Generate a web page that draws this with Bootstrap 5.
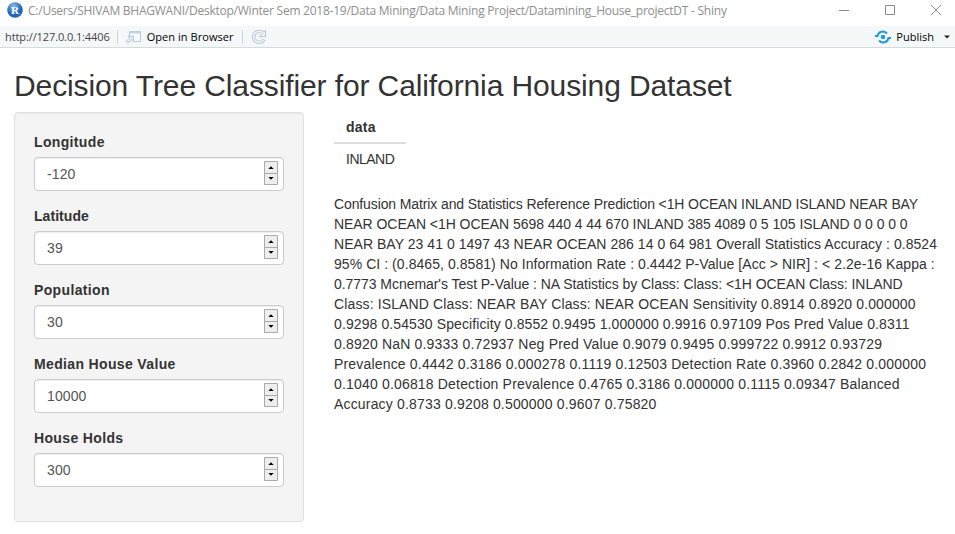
<!DOCTYPE html>
<html lang="en">
<head>
<meta charset="utf-8">
<meta name="viewport" content="width=device-width, initial-scale=1">
<title>Datamining_House_projectDT - Shiny</title>
<link href="https://cdn.jsdelivr.net/npm/bootstrap@5.3.0/dist/css/bootstrap.min.css" rel="stylesheet">
<style>
body{font:14px/20px "Liberation Sans",Arial,sans-serif;color:#333;background:#fff;height:534px;overflow:hidden}
.titlebar{height:26px;padding-left:7px;font:12px/20px "Open Sans","Noto Sans",sans-serif;color:#8e8e8e}
.title-text{margin-left:5px;padding-top:1px;white-space:nowrap;letter-spacing:-.245px}
.win-icons{margin-right:13px;gap:34px;height:20px}
.toolbar{height:22px;background:#f4f8f9;border-bottom:1px solid #d5dadc;font:11px/20px "Open Sans","Noto Sans",sans-serif;color:#444;padding:0 5px}
.tool-sep{width:1px;height:14px;background:#ccd3d6}
.tool-label{color:#000;font-weight:500}
#url{letter-spacing:-.1px}
.page{padding:20px 14px 0}
.page h2{font-size:30px;line-height:33px;margin:0 0 11px;font-weight:400;letter-spacing:-.11px;padding-top:1px;height:33px}
.well{width:290px;height:410px;padding:19px;background:#f4f4f4;border:1px solid #e0e0e0;border-radius:4px;box-shadow:inset 0 1px 1px rgba(0,0,0,.05)}
.well label{font-weight:700;margin-bottom:5px;display:block;letter-spacing:.35px}
.well label[for=lat]{letter-spacing:.05px}
.field{margin-bottom:15px}
.field .form-control{height:34px;padding:6px 12px;font-size:14px;line-height:20px;color:#555;border:1px solid #ccc;border-radius:4px;box-shadow:inset 0 1px 1px rgba(0,0,0,.075);letter-spacing:.12px}
.spin{right:6px;top:4px;width:14px;height:24px}
.results{margin-left:30px;width:607px}
.data-grid{width:72px;margin-bottom:20px}
.data-grid th,.data-grid td{padding:5px 12px;line-height:20px}
.data-grid th{border-bottom:2px solid #ddd;letter-spacing:.25px}
.data-grid td{padding-right:0;letter-spacing:-.5px}
.report span{display:block;white-space:nowrap}
.report span:nth-child(1){letter-spacing:-.115px}
.report span:nth-child(2){letter-spacing:-.055px}
.report span:nth-child(3){letter-spacing:.04px}
.report span:nth-child(4){letter-spacing:.06px}
.report span:nth-child(5){letter-spacing:-.05px}
.report span:nth-child(6){letter-spacing:.125px}
.report span:nth-child(7){letter-spacing:.1px}
.report span:nth-child(n+8){letter-spacing:.175px}
</style>
<script src="https://cdn.jsdelivr.net/npm/bootstrap@5.3.0/dist/js/bootstrap.bundle.min.js"></script>
</head>
<body>
<svg class="d-none">
  <symbol id="spinner" viewBox="0 0 14 24">
    <path d="M.5.5h13v23H.5z" fill="#eee" stroke="#a9a9a9"/><path d="M1 12.500h12" stroke="#a9a9a9"/>
    <path d="M4.300 8h5.400L7 5.200zM4.300 16h5.400L7 18.800z" fill="#000"/>
  </symbol>
</svg>
<header>
  <div class="titlebar d-flex">
    <svg width="16" height="20" viewBox="0 0 16 20"><defs><radialGradient id="ball" cx=".4" cy=".25"><stop stop-color="#8ab8e8"/><stop offset="1" stop-color="#2466b8"/></radialGradient></defs><circle cx="8" cy="10" r="7.800" fill="url(#ball)"/><text x="8" y="13.800" text-anchor="middle" font-family="Liberation Serif,serif" font-weight="700" font-size="11" fill="#fff">R</text></svg>
    <div class="title-text">C:/Users/SHIVAM BHAGWANI/Desktop/Winter Sem 2018-19/Data Mining/Data Mining Project/Datamining_House_projectDT - Shiny</div>
    <div class="win-icons d-flex align-items-center ms-auto">
      <svg width="12" height="12" fill="none" stroke="#888"><path d="M1 6.500h10"/></svg>
      <svg width="12" height="12" fill="none" stroke="#888"><path d="M1.500 1.500h9v9h-9z"/></svg>
      <svg width="12" height="12" fill="none" stroke="#888"><path d="M1 1l10 10M11 1L1 11"/></svg>
    </div>
  </div>
  <div class="toolbar d-flex align-items-center">
    <span id="url">http://127.0.0.1:4406</span>
    <span class="tool-sep" style="margin-left:7px"></span>
    <svg style="margin-left:7px" width="16" height="14" viewBox="0 0 16 14"><path d="M4.500 6V1.500h11v10H9" fill="#f7fbfd" stroke="#b9c8d3"/><path d="M4.500 2.500h11" stroke="#c3d2dc" stroke-width="2"/><path d="M1 11.500l4-4-2-1.500h5.500v5.500L7 9.500l-4 3.500z" fill="#e2edf6" stroke="#a9bdd0" stroke-width=".8"/></svg>
    <span class="tool-label" id="open" style="margin-left:6px;letter-spacing:.06px">Open in Browser</span>
    <span class="tool-sep ms-2"></span>
    <svg class="ms-2" width="16" height="16" viewBox="0 0 16 16" fill="none"><path d="M12.300 4.200A5.500 5.500 0 1 0 13 10.500" stroke="#b4bfcc" stroke-width="3.400"/><path d="M14.500 1.500v6.200H8.300z" fill="#edf2f6" stroke="#b4bfcc" stroke-width=".9"/><path d="M12.300 4.200A5.500 5.500 0 1 0 12.600 11" stroke="#edf2f6" stroke-width="1.800"/></svg>
    <div class="d-flex align-items-center ms-auto">
      <svg width="16" height="14" viewBox="0 0 16 14" fill="none" stroke="#259bd3" stroke-width="2"><circle cx="8" cy="7" r="2.300" fill="#259bd3" stroke="none"/><path d="M0 6h2.500C3.500 1 9 .5 12 3.500M16 8h-2.500C12.500 13 7 13.500 4 10.500"/></svg>
      <span class="tool-label" id="publish" style="margin-left:5px">Publish</span>
      <svg style="margin-left:10px" width="6" height="4"><path d="M0 .5h6L3 3.500z" fill="#222"/></svg>
    </div>
  </div>
</header>
<main class="page">
  <h2>Decision Tree Classifier for California Housing Dataset</h2>
  <div class="d-flex align-items-start">
    <form class="well flex-shrink-0">
      <div class="field"><label for="lon">Longitude</label><div class="position-relative"><input id="lon" class="form-control" value="-120"><svg class="spin position-absolute"><use href="#spinner"/></svg></div></div>
      <div class="field"><label for="lat">Latitude</label><div class="position-relative"><input id="lat" class="form-control" value="39"><svg class="spin position-absolute"><use href="#spinner"/></svg></div></div>
      <div class="field"><label for="pop">Population</label><div class="position-relative"><input id="pop" class="form-control" value="30"><svg class="spin position-absolute"><use href="#spinner"/></svg></div></div>
      <div class="field"><label for="med">Median House Value</label><div class="position-relative"><input id="med" class="form-control" value="10000"><svg class="spin position-absolute"><use href="#spinner"/></svg></div></div>
      <div class="field"><label for="hh">House Holds</label><div class="position-relative"><input id="hh" class="form-control" value="300"><svg class="spin position-absolute"><use href="#spinner"/></svg></div></div>
    </form>
    <section class="results">
      <table class="data-grid"><thead><tr><th>data</th></tr></thead><tbody><tr><td>INLAND</td></tr></tbody></table>
      <div class="report">
        <span>Confusion Matrix and Statistics Reference Prediction &lt;1H OCEAN INLAND ISLAND NEAR BAY</span>
        <span>NEAR OCEAN &lt;1H OCEAN 5698 440 4 44 670 INLAND 385 4089 0 5 105 ISLAND 0 0 0 0 0</span>
        <span>NEAR BAY 23 41 0 1497 43 NEAR OCEAN 286 14 0 64 981 Overall Statistics Accuracy : 0.8524</span>
        <span>95% CI : (0.8465, 0.8581) No Information Rate : 0.4442 P-Value [Acc &gt; NIR] : &lt; 2.2e-16 Kappa :</span>
        <span>0.7773 Mcnemar's Test P-Value : NA Statistics by Class: Class: &lt;1H OCEAN Class: INLAND</span>
        <span>Class: ISLAND Class: NEAR BAY Class: NEAR OCEAN Sensitivity 0.8914 0.8920 0.000000</span>
        <span>0.9298 0.54530 Specificity 0.8552 0.9495 1.000000 0.9916 0.97109 Pos Pred Value 0.8311</span>
        <span>0.8920 NaN 0.9333 0.72937 Neg Pred Value 0.9079 0.9495 0.999722 0.9912 0.93729</span>
        <span>Prevalence 0.4442 0.3186 0.000278 0.1119 0.12503 Detection Rate 0.3960 0.2842 0.000000</span>
        <span>0.1040 0.06818 Detection Prevalence 0.4765 0.3186 0.000000 0.1115 0.09347 Balanced</span>
        <span>Accuracy 0.8733 0.9208 0.500000 0.9607 0.75820</span>
      </div>
    </section>
  </div>
</main>
</body>
</html>
